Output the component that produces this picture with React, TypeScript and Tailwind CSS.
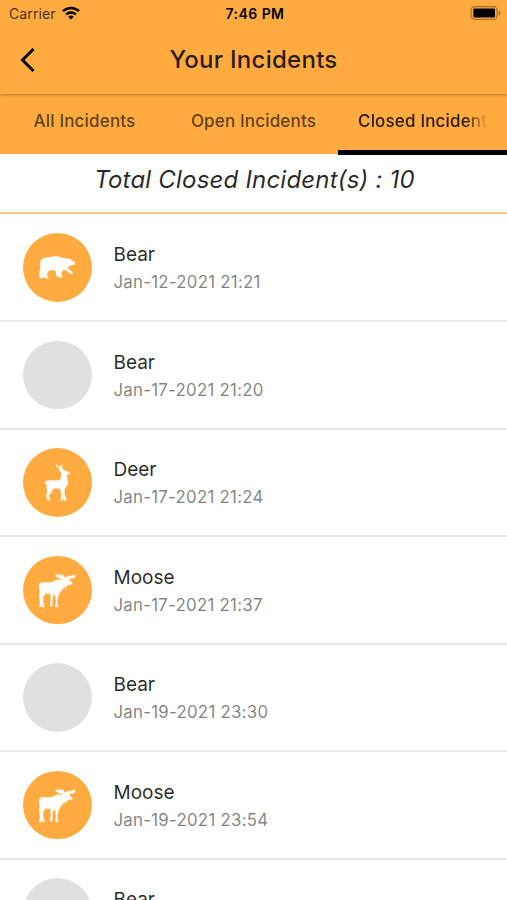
import React from "react";

type Animal = "Bear" | "Deer" | "Moose";

interface Incident {
  animal: Animal;
  date: string;
  icon: boolean;
}

const incidents: Incident[] = [
  { animal: "Bear", date: "Jan-12-2021 21:21", icon: true },
  { animal: "Bear", date: "Jan-17-2021 21:20", icon: false },
  { animal: "Deer", date: "Jan-17-2021 21:24", icon: true },
  { animal: "Moose", date: "Jan-17-2021 21:37", icon: true },
  { animal: "Bear", date: "Jan-19-2021 23:30", icon: false },
  { animal: "Moose", date: "Jan-19-2021 23:54", icon: true },
  { animal: "Bear", date: "", icon: false },
];

const silhouettes: Record<Animal, string> = {
  Bear: "M97 116 C104 110 116 112 126 110 C136 108 146 108 154 113 C162 115 169 114 174 116 C178 114 181 116 182 119 L194 126 L195 130 L188 134 L180 136 C176 138 172 139 172 142 C176 148 181 152 186 156 L187 160 L179 160 C174 155 169 150 165 148 L158 150 L152 160 L157 167 L156 171 L148 171 L139 167 L137 150 C130 150 122 150 117 149 C115 154 111 159 109 162 L115 170 L114 174 L106 174 L101 167 L98 173 L92 174 L88 168 L89 153 L92 144 C89 132 90 122 97 116 Z",
  Deer: "M151 105 L146 99 L139 94 L138 88 L141 90 L144 95 L149 98 L148 91 L151 94 L154 88 L156 90 L154 97 L160 101 L157 104 L163 106 L168 107 L179 113 L176 117 L169 118 C169 126 174 134 173 144 C172 151 168 156 164 160 L162 172 L168 192 L167 196 L162 196 L157 176 L158 190 L156 196 L152 196 L154 177 L151 160 C143 160 136 158 130 159 C127 168 120 174 116 181 L119 195 L113 196 L109 182 L112 169 L110 154 L111 146 L106 147 L104 142 L109 137 C119 135 133 137 145 136 C153 134 154 126 154 117 L153 109 L146 107 Z",
  Moose: "M88 122 C92 116 101 118 109 118 C119 118 125 118 132 114 L142 109 L151 111 L158 107 L150 106 L139 100 L137 93 L143 97 L144 92 L149 98 L152 92 L155 99 L159 94 L161 101 L167 103 L173 98 L173 102 L181 97 L181 101 L189 95 L196 97 L193 103 L184 106 L177 107 L179 112 L187 120 L185 124 L178 124 L172 126 L168 132 L165 136 L164 128 C158 137 153 143 149 149 L144 159 L142 172 L142 188 L145 191 L136 191 L138 173 L136 158 L131 151 L128 163 L126 182 L127 188 L120 188 L122 172 L122 151 C116 152 110 151 106 151 L99 161 L99 177 L103 190 L98 192 L94 183 L94 191 L88 191 L90 174 L88 158 L89 142 L87 134 Z",
};

function Avatar({ incident }: { incident: Incident }) {
  if (!incident.icon) {
    return <div className="size-[68.5px] shrink-0 rounded-full bg-[#e0e0e0]" />;
  }
  return (
    <div className="size-[68.5px] shrink-0 rounded-full bg-[#ffab40]">
      <svg viewBox="39 38.5 205 205" className="size-full" fill="white">
        <path d={silhouettes[incident.animal]} stroke="white" strokeWidth="1.2" strokeLinejoin="round" />
      </svg>
    </div>
  );
}

function StatusBar() {
  return (
    <div className="grid h-[26px] grid-cols-[1fr_auto_1fr] items-center pl-[9px] pr-[6px] text-black">
      <div className="flex items-center gap-[6px]">
        <span className="text-[14px] tracking-[0.1px] text-black/75">Carrier</span>
        <svg viewBox="0 0 18 14" className="h-[14px] w-[18px]" fill="none" stroke="black" strokeWidth="2.4">
          <path d="M1 5.2a11.5 11.5 0 0 1 16 0" />
          <path d="M4.1 8.5a7 7 0 0 1 9.8 0" />
          <path d="M9 13.4 6.3 10.7a3.9 3.9 0 0 1 5.4 0Z" fill="black" stroke="none" />
        </svg>
      </div>
      <span className="text-center text-[14px] font-semibold tracking-[0.45px]">7:46 PM</span>
      <svg viewBox="0 0 31 14" className="h-[14px] w-[31px] justify-self-end">
        <rect x="1.1" y="0.6" width="26" height="12.8" rx="3.6" fill="none" stroke="#a76e27" strokeWidth="1.2" />
        <rect x="3.3" y="2.6" width="21.7" height="8.8" rx="0.8" fill="black" />
        <path d="M28.6 4.8c2.5.5 2.5 3.9 0 4.4Z" fill="#a76e27" />
      </svg>
    </div>
  );
}

export default function App() {
  return (
    <div className="flex h-[900px] w-full flex-col overflow-hidden bg-white font-['Inter',sans-serif]">
      <header className="z-10 h-[94px] shrink-0 bg-[#ffab40] shadow-[0_1px_3px_rgba(0,0,0,0.3)]">
        <StatusBar />
        <div className="grid h-[68px] grid-cols-[56px_1fr_56px] items-center">
          <svg viewBox="0 0 16 26" className="ml-5 h-[26px] w-4" fill="none" stroke="black" strokeWidth="3">
            <path d="M13.5 2 2.5 13l11 11" />
          </svg>
          <h1 className="text-center text-[24px] font-medium tracking-[0.27px] text-black/85">Your Incidents</h1>
        </div>
      </header>
      <nav className="grid h-[60px] shrink-0 grid-cols-3 bg-[#ffab40] text-[17px] font-medium tracking-[0.17px] text-black/65">
        <div className="flex h-[56px] items-center justify-center whitespace-nowrap">All Incidents</div>
        <div className="flex h-[56px] items-center justify-center whitespace-nowrap">Open Incidents</div>
        <div className="border-b-[5px] border-black pl-[20px] pr-[19px] text-black/85">
          <div className="flex h-[56px] items-center overflow-hidden whitespace-nowrap [mask-image:linear-gradient(to_right,black_82%,transparent)]">
            Closed Incidents
          </div>
        </div>
      </nav>
      <div className="flex h-[60px] shrink-0 justify-center border-b-2 border-[#ffc880] pl-[2px] pt-[7.5px]">
        <p className="text-[24px] italic leading-9 tracking-[0.2px] text-black/85">Total Closed Incident(s) : 10</p>
      </div>
      <ul className="pt-[0.5px]">
        {incidents.map((incident, index) => (
          <li key={index} className="flex h-[107.5px] items-center gap-[22px] border-b-2 border-[#e8e8e8] pl-[23px]">
            <Avatar incident={incident} />
            <div className="flex flex-col pt-[3px]">
              <span className="text-[19px] leading-7 text-black/85">{incident.animal}</span>
              <span className="h-[27px] text-[16.8px] leading-[27px] tracking-[0.28px] text-black/50">{incident.date}</span>
            </div>
          </li>
        ))}
      </ul>
    </div>
  );
}
